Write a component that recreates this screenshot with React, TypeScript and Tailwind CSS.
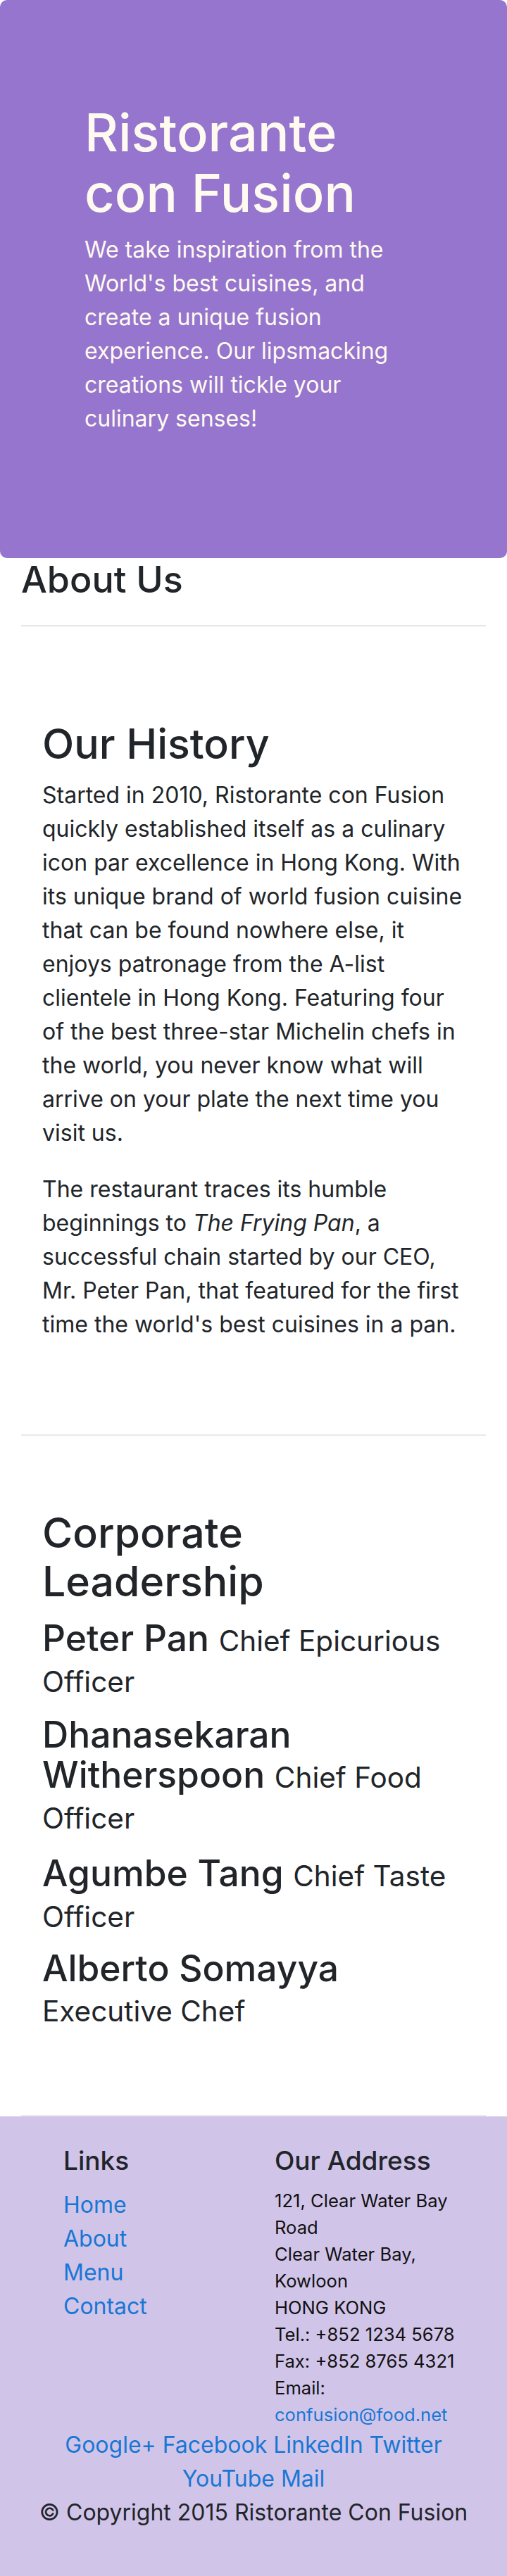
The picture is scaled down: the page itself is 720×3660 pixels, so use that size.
import React from "react";

const Line = ({ children }: { children: React.ReactNode }) => (
  <span className="block whitespace-nowrap">{children}</span>
);

const Small = ({ children }: { children: React.ReactNode }) => (
  <small className="text-[40.5px] leading-[46px] font-normal">{children}</small>
);

export default function App() {
  return (
    <div className="font-['Inter','Noto_Sans',sans-serif] text-[#212529] bg-white">
      {/* Jumbotron */}
      <header className="bg-[#9575cd] rounded-[10px] text-[#fffaf0] px-[120px] pt-[145px] pb-[174px]">
        <h1 className="text-[74px] leading-[86.4px] font-medium">
          <Line>Ristorante</Line>
          <Line>con Fusion</Line>
        </h1>
        <p className="mt-[13px] text-[32px] leading-[48px]">
          <Line>We take inspiration from the</Line>
          <Line>World's best cuisines, and</Line>
          <Line>create a unique fusion</Line>
          <Line>experience. Our lipsmacking</Line>
          <Line>creations will tickle your</Line>
          <Line>culinary senses!</Line>
        </p>
      </header>

      <main className="px-[30px]">
        {/* Breadcrumb heading */}
        <div className="mt-[-3px]">
          <h3 className="text-[52px] leading-[67.2px] font-medium">About Us</h3>
          <div className="mt-[31px] mb-[32px] h-[2px] bg-[#e6e6e6]" />
        </div>

        {/* Our History */}
        <section className="border-b-2 border-[#e9e9e9] px-[30px] pt-[100px] pb-[100px]">
          <h2 className="text-[59px] leading-[69.12px] font-medium">Our History</h2>
          <p className="mt-[15px] text-[32px] leading-[48px]">
            <Line>Started in 2010, Ristorante con Fusion</Line>
            <Line>quickly established itself as a culinary</Line>
            <Line>icon par excellence in Hong Kong. With</Line>
            <Line>its unique brand of world fusion cuisine</Line>
            <Line>that can be found nowhere else, it</Line>
            <Line>enjoys patronage from the A-list</Line>
            <Line>clientele in Hong Kong. Featuring four</Line>
            <Line>of the best three-star Michelin chefs in</Line>
            <Line>the world, you never know what will</Line>
            <Line>arrive on your plate the next time you</Line>
            <Line>visit us.</Line>
          </p>
          <p className="mt-[32px] mb-[32px] text-[32px] leading-[48px]">
            <Line>The restaurant traces its humble</Line>
            <Line>
              beginnings to <em>The Frying Pan</em>, a
            </Line>
            <Line>successful chain started by our CEO,</Line>
            <Line>Mr. Peter Pan, that featured for the first</Line>
            <Line>time the world's best cuisines in a pan.</Line>
          </p>
        </section>

        {/* Corporate Leadership */}
        <section className="border-b-2 border-[#e9e9e9] px-[30px] pt-[103px] pb-[106px]">
          <h2 className="text-[59px] leading-[69.12px] font-medium">
            <Line>Corporate</Line>
            <Line>Leadership</Line>
          </h2>
          <div className="mt-[18px] flex flex-col">
            <h4 className="text-[51.5px] leading-[57.6px] font-medium">
              <Line>
                Peter Pan <Small>Chief Epicurious</Small>
              </Line>
              <Line>
                <Small>Officer</Small>
              </Line>
            </h4>
            <h4 className="mt-[21px] text-[51.5px] leading-[57.6px] font-medium">
              <Line>Dhanasekaran</Line>
              <Line>
                Witherspoon <Small>Chief Food</Small>
              </Line>
              <Line>
                <Small>Officer</Small>
              </Line>
            </h4>
            <h4 className="mt-[25px] text-[51.5px] leading-[57.6px] font-medium">
              <Line>
                Agumbe Tang <Small>Chief Taste</Small>
              </Line>
              <Line>
                <Small>Officer</Small>
              </Line>
            </h4>
            <h4 className="mt-[19px] mb-[16px] text-[51.5px] leading-[57.6px] font-medium">
              <Line>Alberto Somayya</Line>
              <Line>
                <Small>Executive Chef</Small>
              </Line>
            </h4>
          </div>
        </section>
      </main>

      {/* Footer */}
      <footer className="bg-[#d1c4e9] pt-[39px] pb-[70px]">
        <div className="grid grid-cols-[300px_300px] pl-[90px]">
          <div>
            <h5 className="text-[37px] leading-[48px] font-medium">Links</h5>
            <ul className="mt-[15px] text-[32px] leading-[48px] text-[#1877d4]">
              <li><a href="#">Home</a></li>
              <li><a href="#">About</a></li>
              <li><a href="#">Menu</a></li>
              <li><a href="#">Contact</a></li>
            </ul>
          </div>
          <div>
            <h5 className="text-[37px] leading-[48px] font-medium">Our Address</h5>
            <address className="mt-[14px] not-italic text-[25.6px] leading-[38px] text-[#111]">
              <Line>121, Clear Water Bay</Line>
              <Line>Road</Line>
              <Line>Clear Water Bay,</Line>
              <Line>Kowloon</Line>
              <Line>HONG KONG</Line>
              <Line>Tel.: +852 1234 5678</Line>
              <Line>Fax: +852 8765 4321</Line>
              <Line>Email:</Line>
              <Line>
                <a href="#" className="text-[#1877d4]">confusion@food.net</a>
              </Line>
            </address>
          </div>
        </div>
        <div className="text-center text-[32px] leading-[48px] text-[#1877d4]">
          <Line>
            <a href="#">Google+</a> <a href="#">Facebook</a> <a href="#">LinkedIn</a>{" "}
            <a href="#">Twitter</a>
          </Line>
          <Line>
            <a href="#">YouTube</a> <a href="#">Mail</a>
          </Line>
        </div>
        <p className="text-center text-[32px] leading-[48px]">© Copyright 2015 Ristorante Con Fusion</p>
      </footer>
    </div>
  );
}
